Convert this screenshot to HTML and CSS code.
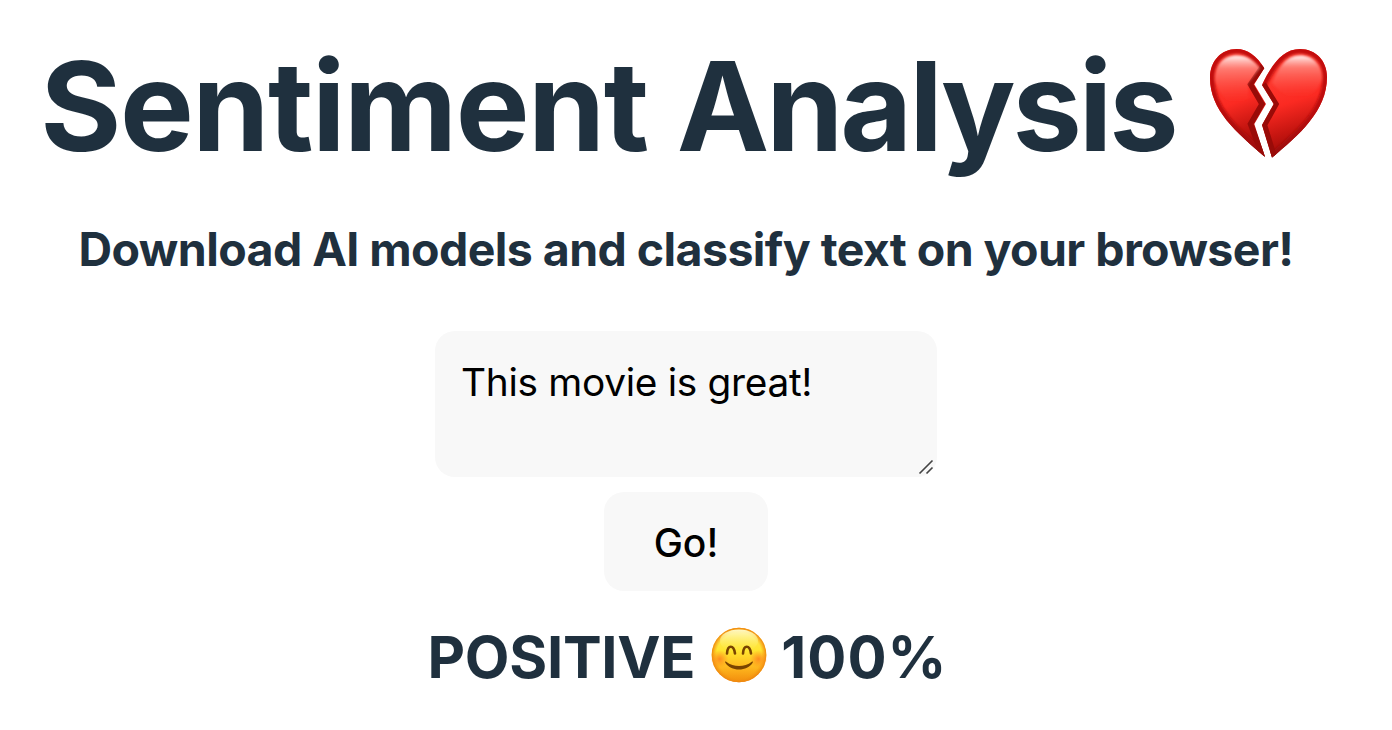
FILE: index.html
```html
<!DOCTYPE html>
<html lang="en">
<head>
<meta charset="utf-8">
<title>Sentiment Analysis</title>
<link rel="stylesheet" href="styles.css">
</head>
<body>
<main class="app">
<h1 class="title"><span class="word-first">Sentiment</span> <span class="word-second">Analysis</span>
<svg class="heart" viewBox="0 0 120 112" role="img" aria-label="broken heart">
<defs>
<linearGradient id="red" x1=".3" x2=".5" y2="1"><stop stop-color="#ff493d"/><stop offset=".5" stop-color="#fb2a22"/><stop offset=".75" stop-color="#c51510"/><stop offset="1" stop-color="#8d0805"/></linearGradient>
<linearGradient id="rim" x2="0" y2="1"><stop stop-color="#c40f0b"/><stop offset=".55" stop-color="#bd100c"/><stop offset="1" stop-color="#990907"/></linearGradient>
<linearGradient id="shine" x2="0" y2="1"><stop stop-color="#fff" stop-opacity=".95"/><stop offset=".28" stop-color="#ffa298" stop-opacity=".6"/><stop offset="1" stop-color="#ff4a3f" stop-opacity="0"/></linearGradient>
<filter id="soft" x="-20%" y="-20%" width="140%" height="140%"><feGaussianBlur stdDeviation="1"/></filter>
<clipPath id="left"><path d="M55.3 20.3C48 8 38 1 27.7 1C12 1 1 13 1 30C1 62 27 84 56 109L45.3 76L57 56L45.3 36.3Z"/></clipPath>
<clipPath id="right"><path d="M53 37C62 18 73 1 91 1C107 1 118 13 118 29C118 63 90 87 63 109.7L53 77L64.7 56Z"/></clipPath>
</defs>
<g clip-path="url(#left)">
<path fill="url(#red)" d="M0 0h60v111H0z"/>
<path class="rim" stroke="url(#rim)" filter="url(#soft)" d="M55.3 20.3C48 8 38 1 27.7 1C12 1 1 13 1 30C1 62 27 84 56 109"/>
<path class="bevel" d="M54 18L41.5 36.3L53 56L41.5 76L54 109"/>
<path fill="url(#shine)" filter="url(#soft)" d="M6 33C6 17 14 7.500 28 7.500C39 7.500 46 14 51 20L39 36L40 50C26 60 13 54 6 33Z"/>
</g>
<g clip-path="url(#right)">
<path fill="url(#red)" d="M50 0h70v111H50z"/>
<path class="rim" stroke="url(#rim)" filter="url(#soft)" d="M53 37C62 18 73 1 91 1C107 1 118 13 118 29C118 63 90 87 63 109.700"/>
<path class="bevel" d="M54.500 36L67 56L55.500 77L65 108"/>
<path fill="url(#shine)" filter="url(#soft)" d="M63 35C70 19 77 7.500 91 7.500C105 7.500 113 18 113 31C106 54 80 57 63 35Z"/>
</g>
</svg></h1>
<h2 class="subtitle">Download AI models and classify text on your browser!</h2>
<div class="field">
<textarea class="input" spellcheck="false" aria-label="Text to classify">This movie is great!</textarea>
<svg class="grip" viewBox="0 0 16 16" aria-hidden="true"><path d="M1.500 14.500l13-13M8.500 14.500l6-6"/></svg>
</div>
<button class="go">Go!</button>
<p class="result"><span class="label">POSITIVE</span>
<svg class="face" viewBox="0 0 56 56" role="img" aria-label="smiling face">
<defs>
<linearGradient id="gold" x2="0" y2="1"><stop stop-color="#ffb51d"/><stop offset=".12" stop-color="#ffe75a"/><stop offset=".42" stop-color="#ffe52f"/><stop offset=".7" stop-color="#ffbc20"/><stop offset="1" stop-color="#f28b0c"/></linearGradient>
<radialGradient id="edge"><stop offset=".82" stop-color="#f7a012" stop-opacity="0"/><stop offset="1" stop-color="#ee850f"/></radialGradient>
<radialGradient id="blush"><stop stop-color="#ff681c" stop-opacity=".65"/><stop offset="1" stop-color="#ff7b19" stop-opacity="0"/></radialGradient>
<linearGradient id="glow" x2="0" y2="1"><stop stop-color="#fffac8"/><stop offset="1" stop-color="#ffec45" stop-opacity="0"/></linearGradient>
</defs>
<circle cx="28" cy="28" r="27.300" fill="url(#gold)"/>
<circle cx="28" cy="28" r="27.300" fill="url(#edge)"/>
<ellipse cx="28" cy="14" rx="19" ry="11.500" fill="url(#glow)"/>
<circle cx="8.500" cy="32" r="9" fill="url(#blush)"/><circle cx="47.500" cy="32" r="9" fill="url(#blush)"/>
<path class="eye" d="M16 26.500c.6-9 6.800-9 8 0M32 26.500c.6-9 6.800-9 8 0"/>
<path fill="#794400" d="M14.200 35.400c-.5-.8.400-1.300 1-.7c7.500 5.800 18.200 5.800 25.600 0c.6-.6 1.500-.1 1 .7C36.500 44.800 19.500 44.800 14.200 35.400Z"/>
</svg>
<span class="score">100%</span></p>
</main>
</body>
</html>
```
FILE: styles.css
```css
* { box-sizing: border-box; }
body { margin: 0; background: #fff; color: #1f303e; font-family: Inter, "Liberation Sans", sans-serif; }
.app { width: 1372px; height: 730px; display: flex; flex-direction: column; align-items: center; }
.title { margin: 36px 0 0; height: 141px; font-size: 124px; line-height: 141px; font-weight: 700; display: flex; white-space: nowrap; }
.word-first { letter-spacing: -1.5px; }
.word-second { margin-left: 29px; letter-spacing: -3.1px; }
.heart { flex: none; width: 120px; height: 112px; margin: 12px 3px 0 33px; }
.rim { fill: none; stroke-width: 9px; }
.bevel { fill: none; stroke: #990b08; stroke-width: 5.5px; }
.subtitle { margin: 42px 0 0; font-size: 46.5px; line-height: 60px; height: 60px; font-weight: 700; white-space: nowrap; letter-spacing: -.58px; }
.field { position: relative; margin: 52px 0 0; width: 502px; height: 146px; }
.input { display: block; width: 100%; height: 100%; border: 0; border-radius: 20px; background: #f8f8f8; color: #000; padding: 26px; font: 400 38.8px/50px Inter, sans-serif; letter-spacing: -.3px; resize: none; overflow: hidden; }
.grip { position: absolute; right: 3px; bottom: 2px; width: 16px; height: 16px; fill: none; stroke: #444; stroke-width: 1.6px; }
.go { margin: 15px 0 0; padding: 3px 0 0; width: 164px; height: 99px; border: 0; border-radius: 20px; background: #f8f8f8; color: #000; font: 500 39px/50px Inter, sans-serif; }
.result { margin: 30px 0 0 3px; height: 72px; display: flex; font-size: 58px; line-height: 72px; font-weight: 700; }
.label { letter-spacing: -.3px; }
.face { width: 56px; height: 56px; margin: 6px 14px 0 16px; }
.eye { fill: none; stroke: #794400; stroke-width: 2.6px; stroke-linecap: round; }
.score { letter-spacing: 1px; }
```
